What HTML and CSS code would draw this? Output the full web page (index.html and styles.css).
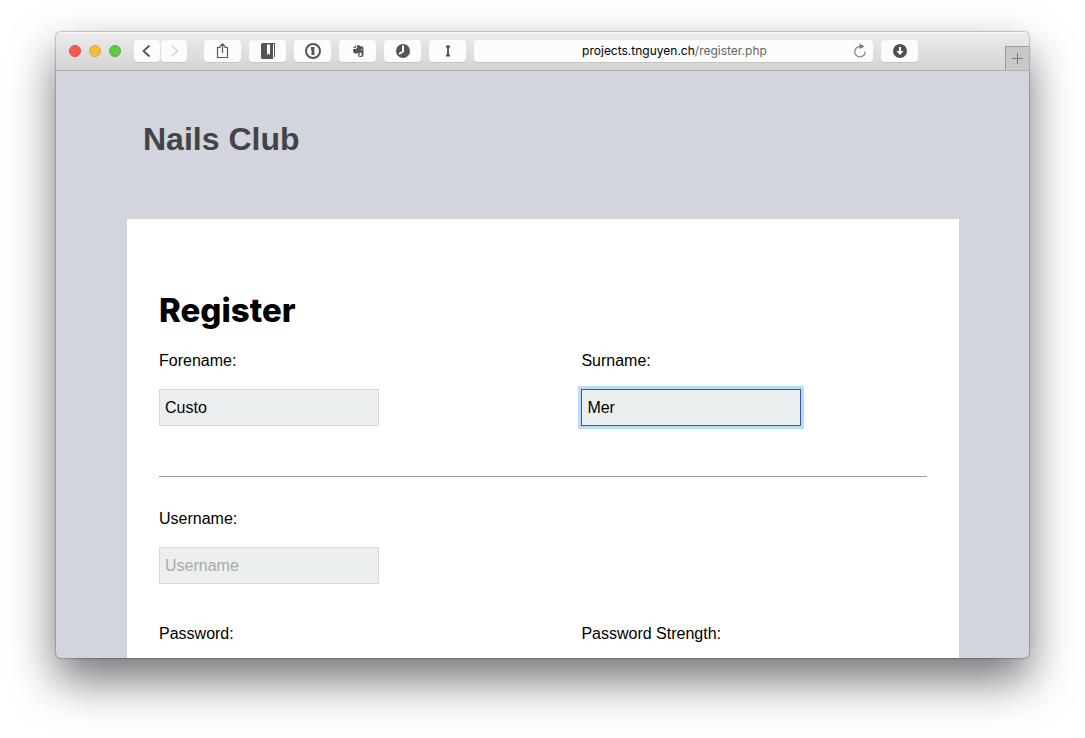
FILE: index.html
```html
<!DOCTYPE html>
<html lang="en">
<head>
<meta charset="utf-8">
<title>Nails Club – Register</title>
<link rel="stylesheet" href="styles.css">
</head>
<body>
<div class="window">
  <header class="toolbar">
    <div class="lights"><span class="light red"></span><span class="light yellow"></span><span class="light green"></span></div>
    <div class="history">
      <button class="tool nav" aria-label="Back"><svg width="26" height="22" viewBox="0 0 26 22"><path d="M15.500 5.500 9.500 11l6 5.500" fill="none" stroke="#505050" stroke-width="1.700"/></svg></button>
      <button class="tool nav" aria-label="Forward"><svg width="26" height="22" viewBox="0 0 26 22"><path d="M10.500 5.500l6 5.500-6 5.500" fill="none" stroke="#d4d4d4" stroke-width="1.500"/></svg></button>
    </div>
    <div class="tools">
      <button class="tool" aria-label="Share"><svg width="37" height="22" viewBox="0 0 37 22" fill="none" stroke="#585858" stroke-width="1.200"><path d="M16.500 7.500h-3v10h10v-10h-3M18.500 13V4M15.500 6.800l3-3 3 3"/></svg></button>
      <button class="tool" aria-label="Reading list"><svg width="37" height="22" viewBox="0 0 37 22" fill="#555"><path d="M12 4.500Q12 3 13.500 3H26v14h-1V4h-1v15H13.500Q12 19 12 17.500z"/><path d="M18 4.500h3V15l-1.500-1.500L18 15z" fill="#fff"/></svg></button>
      <button class="tool" aria-label="Password manager"><svg width="37" height="22" viewBox="0 0 37 22"><circle cx="19" cy="11" r="7" fill="none" stroke="#555" stroke-width="2"/><path d="M17 7h3.500v3.500l-.7.600.7.600V15H17.500v-3.500l.7-.6-1.200-.6z" fill="#555"/></svg></button>
      <button class="tool" aria-label="Web clipper"><svg width="37" height="22" viewBox="0 0 37 22"><path d="M14 8l3-2.800V7q0 1-1 1zM18 5.300h2.500l1 .9 2 .4q1 .4 1 2.400v5q0 3-2 3h-1.500q-2 0-2-1.800 0-1.700 2-1.700v1.200q-.8 0-.8.600t.8.600h.8q.8 0 .8-1.400v-1.200q-.4-.9-1.600-.9-.5 1.200-1.700 1.200H16q-2-.3-2-4.700h2.500Q18 8.900 18 7.500z" fill="#555"/><circle cx="22.500" cy="9.700" r=".6" fill="#fff"/></svg></button>
      <button class="tool" aria-label="History"><svg width="37" height="22" viewBox="0 0 37 22"><circle cx="19" cy="11" r="7" fill="#555"/><path d="M19 5.500v6L15 14" fill="none" stroke="#fff" stroke-width="2"/></svg></button>
      <button class="tool" aria-label="Save page"><svg width="37" height="22" viewBox="0 0 37 22"><path d="M17 6.500h4M19 6v10M17 15.500h4" fill="none" stroke="#4d4d4d" stroke-width="1.800"/></svg></button>
    </div>
    <div class="address">
      <button class="url">projects.tnguyen.ch<span class="path">/register.php</span></button>
      <button class="reload" aria-label="Reload"><svg width="16" height="16" viewBox="0 0 16 16"><path d="M8 3.500A5.200 5.200 0 1 0 13.200 8.500" fill="none" stroke="#8a8a8a" stroke-width="1.300"/><path d="M7.500.5 12.500 3.500 7.500 6z" fill="#777"/></svg></button>
    </div>
    <button class="tool" aria-label="Downloads"><svg width="37" height="22" viewBox="0 0 37 22"><circle cx="19" cy="11" r="7" fill="#505050"/><path d="M18 7h2v4h2.500L19 15l-3.500-4H18z" fill="#fff"/></svg></button>
    <button class="new-tab" aria-label="New tab"><svg width="23" height="23" viewBox="0 0 23 23"><path d="M6 11.500h11M11.500 6v11" stroke="#777" fill="none"/></svg></button>
  </header>
  <main class="page">
    <h1 class="brand">Nails Club</h1>
    <form class="card">
      <h2 class="title">Register</h2>
      <div class="row">
        <div class="field"><label for="forename">Forename:</label><input id="forename" type="text" value="Custo"></div>
        <div class="field"><label for="surname">Surname:</label><input id="surname" class="active" type="text" value="Mer"></div>
      </div>
      <hr class="rule">
      <div class="row">
        <div class="field"><label for="username">Username:</label><input id="username" type="text" placeholder="Username"></div>
      </div>
      <div class="row next">
        <div class="field"><span>Password:</span></div>
        <div class="field"><span>Password Strength:</span></div>
      </div>
    </form>
  </main>
</div>
</body>
</html>
```
FILE: styles.css
```css
* { box-sizing: border-box; }
body {
  margin: 0;
  min-height: 100vh;
  padding: 32px 56px 80px;
  display: flex;
  background: #fff;
  font: 16px/18px "Liberation Sans", Arial, sans-serif;
  color: #000;
  overflow: hidden;
}
button { border: 0; padding: 0; font: inherit; color: inherit; background: none; }
svg { display: block; }
.window {
  flex: 1;
  display: flex;
  flex-direction: column;
  border-radius: 5px;
  overflow: hidden;
  background: #d2d5dd;
  box-shadow: 0 0 1px 1px rgba(0, 0, 0, .2), 0 22px 46px rgba(0, 0, 0, .55);
}
.toolbar {
  display: flex;
  align-items: center;
  height: 39px;
  padding-left: 13px;
  border-bottom: 1px solid #b0b1b3;
  background: linear-gradient(#ececec, #d4d4d4);
  box-shadow: inset 0 1px #f6f6f6;
}
.lights { display: flex; gap: 8px; margin-right: 13px; }
.light { width: 12px; height: 12px; border-radius: 50%; border: 1px solid; }
.red { background: #f05b56; border-color: #df4744; }
.yellow { background: #f6bd3e; border-color: #e0a53a; }
.green { background: #62c944; border-color: #4eb238; }
.history { display: flex; gap: 1px; margin-right: 17px; }
.tools { display: flex; gap: 8px; margin-right: 8px; }
.tool {
  width: 37px;
  height: 22px;
  border-radius: 4px;
  background: #fcfcfc;
  box-shadow: 0 1px #c3c3c3;
}
.nav { width: 26px; }
.address {
  flex: 1;
  display: flex;
  align-items: center;
  height: 22px;
  margin-right: 8px;
  padding: 0 5px 0 23px;
  border-radius: 4px;
  background: #fcfcfc;
  box-shadow: 0 1px #c3c3c3;
}
.url { flex: 1; font: 12px/22px Inter, Roboto, sans-serif; color: #000; }
.path { color: #666; }
.new-tab {
  align-self: flex-end;
  width: 24px;
  height: 24px;
  margin-left: 87px;
  border: 1px solid #999;
  border-width: 1px 0 0 1px;
  background: #c8c8c8;
}
.page { flex: 1; padding: 0 70px 0 71px; display: flex; flex-direction: column; }
.brand { margin: 0; padding: 50px 16px 62px; font-size: 32px; line-height: 36px; color: #444; }
.card { flex: 1; padding: 71px 32px 15px; background: #fff; }
.title { margin: 0 0 22px; font: 800 33px/40px Inter, "Open Sans", sans-serif; }
.row { display: grid; grid-template-columns: 55% 45%; }
.next { margin-top: 41px; }
.field { display: flex; flex-direction: column; align-items: flex-start; gap: 19px; }
.field input {
  width: 220px;
  height: 37px;
  padding: 0 5px;
  border: 1px solid #d3d8d8;
  border-radius: 0;
  background: #ebeff0;
  font: inherit;
  color: #000;
  outline: none;
}
.field input::placeholder { color: #a9a9a9; }
.field .active { border-color: #2d5fa8; outline: 3px solid #b9dcfb; }
.rule { margin: 50px 0 33px; border: 0; border-top: 1px solid #999; }
```
